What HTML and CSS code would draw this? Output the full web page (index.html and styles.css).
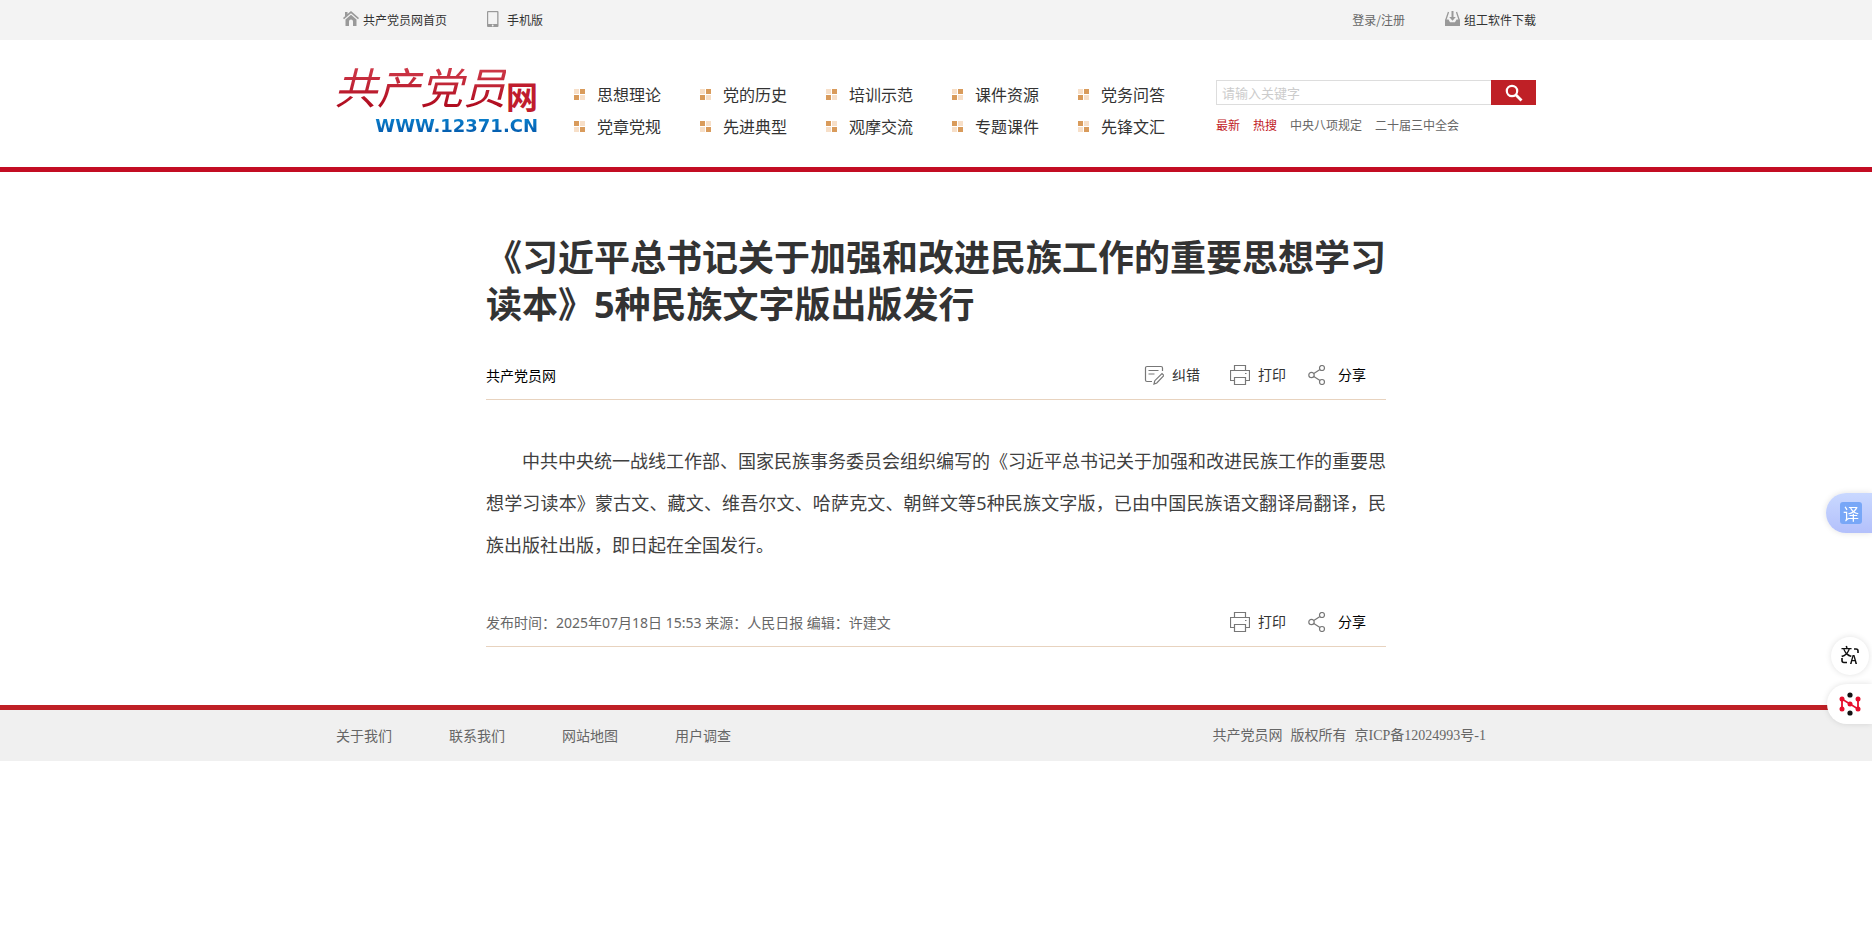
FILE: index.html
```html
<!DOCTYPE html>
<html lang="zh-CN">
  <head>
    <meta charset="UTF-8" />
    <meta name="viewport" content="width=device-width, initial-scale=1.0" />
    <title>《习近平总书记关于加强和改进民族工作的重要思想学习读本》5种民族文字版出版发行</title>
    <link rel="stylesheet" href="styles.css">
  </head>
  <body>
    <!-- shared icons -->
    <svg class="sprite" aria-hidden="true">
      <symbol id="icon-print" viewBox="0 0 20 20">
        <path d="M4.500 5.500V.5h11v5M4.500 15.500h-4v-10h19v10h-4M4.500 12.500h11v7h-11z" />
        <path d="M15 8.500h1.500" />
      </symbol>
      <symbol id="icon-share" viewBox="0 0 18 20">
        <circle cx="3.500" cy="10" r="2.700" />
        <circle cx="14" cy="3" r="2.500" />
        <circle cx="14" cy="17" r="2.500" />
        <path d="M5.800 8.500L12 4.500M5.800 11.500L12 15.500" />
      </symbol>
    </svg>

    <div class="topbar">
      <div class="container topbar-inner">
        <div class="topbar-left">
          <a href="#">
            <svg width="16" height="16" viewBox="0 0 16 16" fill="#999"><path d="M8 0l8 7-1 1.300L8 2.300 1 8.300 0 7l2-1.800V1h2.500v2z" /><path d="M8 3.800l5.500 4.700V15H10v-4.500a2 2 0 0 0-4 0V15H2.500V8.500z" /></svg>
            共产党员网首页
          </a>
          <a href="#">
            <svg width="12" height="16" viewBox="0 0 12 16"><path d="M1 0h9.500a1 1 0 0 1 1 1v14a1 1 0 0 1-1 1H1a1 1 0 0 1-1-1V1a1 1 0 0 1 1-1z" fill="#999" /><path d="M1.200 1.200h9V13H1.200z" fill="#f3f3f3" /><circle cx="5.700" cy="14.500" r=".9" fill="#f3f3f3" /></svg>
            <span class="mobile-text">手机版</span>
          </a>
        </div>
        <div class="topbar-right">
          <a class="login" href="#">登录/注册</a>
          <a href="#">
            <svg width="15" height="16" viewBox="0 0 15 16"><path d="M3.500 1L.8 9M11.500 1l2.700 8" stroke="#999" stroke-width="1.300" fill="none" /><path d="M6.500 0h2v6h2.300L7.500 9.800 4.200 6h2.300z" fill="#999" /><path d="M0 8.500h3.500l1.500 2.700h5l1.500-2.700H15V15H0z" fill="#999" /></svg>
            组工软件下载
          </a>
        </div>
      </div>
    </div>

    <header class="header">
      <div class="container header-inner">
        <a class="logo" href="#">
          <span class="logo-name"><span class="logo-script">共产党员</span><span class="logo-net">网</span></span>
          <span class="logo-url">WWW.12371.CN</span>
        </a>
        <nav class="nav">
          <a href="#">思想理论</a>
          <a href="#">党的历史</a>
          <a href="#">培训示范</a>
          <a href="#">课件资源</a>
          <a href="#">党务问答</a>
          <a class="alt" href="#">党章党规</a>
          <a class="alt" href="#">先进典型</a>
          <a class="alt" href="#">观摩交流</a>
          <a class="alt" href="#">专题课件</a>
          <a class="alt" href="#">先锋文汇</a>
        </nav>
        <div class="search">
          <form class="search-form">
            <input type="text" placeholder="请输入关键字" aria-label="请输入关键字" />
            <button type="submit" aria-label="搜索">
              <svg width="18" height="18" viewBox="0 0 18 18" fill="none" stroke="#fff"><circle cx="7" cy="7" r="5.200" stroke-width="2.200" /><path d="M11 11l5.500 5.500" stroke-width="2.800" /></svg>
            </button>
          </form>
          <div class="hot">
            <a class="red" href="#">最新</a>
            <a class="red" href="#">热搜</a>
            <a href="#">中央八项规定</a>
            <a href="#">二十届三中全会</a>
          </div>
        </div>
      </div>
    </header>

    <main class="article">
      <h1>《习近平总书记关于加强和改进民族工作的重要思想学习读本》5种民族文字版出版发行</h1>
      <div class="meta">
        <span class="site">共产党员网</span>
        <div class="tools">
          <button type="button" class="tool tool-edit">
            <svg width="20" height="20" viewBox="0 0 20 20"><path d="M18.500 6V3A1.500 1.500 0 0 0 17 1.500H3A1.500 1.500 0 0 0 1.500 3v12A1.500 1.500 0 0 0 3 16.500h5M4.500 5.500h10M4.500 9h6" /><path d="M10 19l.8-3.300L18 8.500l2 2-7.200 7.500z" /></svg>
            纠错
          </button>
          <button type="button" class="tool"><svg width="20" height="20"><use href="#icon-print" /></svg>打印</button>
          <button type="button" class="tool tool-share"><svg width="18" height="20"><use href="#icon-share" /></svg>分享</button>
        </div>
      </div>
      <div class="content">
        <p>中共中央统一战线工作部、国家民族事务委员会组织编写的《习近平总书记关于加强和改进民族工作的重要思想学习读本》蒙古文、藏文、维吾尔文、哈萨克文、朝鲜文等5种民族文字版，已由中国民族语文翻译局翻译，民族出版社出版，即日起在全国发行。</p>
      </div>
      <div class="meta">
        <span class="source">发布时间：2025年07月18日 15:53 来源：人民日报 编辑：许建文</span>
        <div class="tools">
          <button type="button" class="tool"><svg width="20" height="20"><use href="#icon-print" /></svg>打印</button>
          <button type="button" class="tool tool-share"><svg width="18" height="20"><use href="#icon-share" /></svg>分享</button>
        </div>
      </div>
    </main>

    <footer class="footer">
      <div class="container footer-inner">
        <div class="footer-links">
          <a href="#">关于我们</a>
          <a href="#">联系我们</a>
          <a href="#">网站地图</a>
          <a href="#">用户调查</a>
        </div>
        <div class="copyright">
          <span>共产党员网</span>
          <span>版权所有</span>
          <a href="#">京ICP备12024993号-1</a>
        </div>
      </div>
    </footer>

    <!-- floating buttons on the right edge -->
    <button type="button" class="float float-translate"><span>译</span></button>
    <button type="button" class="float float-lang" aria-label="切换语言">
      <svg width="26" height="26" viewBox="0 0 26 26">
        <text x="4" y="13" font-size="11">文</text>
        <text x="13" y="21" font-size="11">A</text>
        <path d="M17 6h2a2 2 0 0 1 2 2v2M5 15v2.500a2 2 0 0 0 2 2h3" fill="none" stroke="#111" stroke-width="1.600" />
      </svg>
    </button>
    <button type="button" class="float float-tool" aria-label="工具">
      <svg width="22" height="24" viewBox="0 0 22 24">
        <path d="M3 17V7l16 10V7" fill="none" stroke="#e60f2d" stroke-width="1.800" />
        <g fill="#e60f2d"><circle cx="3" cy="7" r="2.500" /><circle cx="3" cy="17" r="2.500" /><circle cx="11" cy="12" r="2.500" /><circle cx="19" cy="7" r="2.500" /><circle cx="19" cy="17" r="2.500" /></g>
        <circle cx="11" cy="3" r="2.600" fill="#111" />
        <circle cx="11" cy="21" r="2.600" fill="#111" />
      </svg>
    </button>
  </body>
</html>
```
FILE: styles.css
```css
* {
  box-sizing: border-box;
}
body {
  margin: 0;
  font-family: "Noto Sans CJK SC", sans-serif;
  font-size: 14px;
  color: #333;
  background: #fff;
}
a {
  color: inherit;
  text-decoration: none;
}
button {
  border: none;
  padding: 0;
  font-family: inherit;
  cursor: pointer;
}
svg {
  display: block;
  flex: none;
}
.sprite {
  position: absolute;
  width: 0;
  height: 0;
}
.container {
  max-width: 1200px;
  margin: 0 auto;
}

/* top bar */
.topbar {
  background: #f3f3f3;
  font-size: 12px;
  line-height: 40px;
}
.topbar-inner,
.topbar-left,
.topbar-right,
.topbar a {
  display: flex;
  align-items: center;
}
.topbar-inner {
  justify-content: space-between;
  padding-left: 7px;
}
.topbar-left,
.topbar-right {
  gap: 40px;
}
.topbar a {
  gap: 4px;
}
.topbar svg {
  margin-bottom: 2px;
}
.mobile-text {
  padding-left: 4px;
}
.topbar .login {
  color: #666;
}

/* header */
.header {
  border-bottom: 5px solid #c30d23;
}
.header-inner {
  display: flex;
  align-items: flex-start;
  padding: 14px 0 25px;
}
.logo {
  width: 202px;
  display: flex;
  flex-direction: column;
  align-items: flex-end;
  white-space: nowrap;
}
.logo-name {
  display: flex;
  align-items: flex-end;
}
.logo-script {
  font-size: 43px;
  font-style: italic;
  line-height: 62px;
  background: linear-gradient(#d94a58, #a80014);
  background-clip: text;
  color: transparent;
}
.logo-net {
  font-size: 32px;
  font-weight: bold;
  line-height: 42px;
  color: #c01c2e;
}
.logo-url {
  font: bold 18px/20px "DejaVu Sans", sans-serif;
  background: linear-gradient(#0a84d0, #0455a8);
  background-clip: text;
  color: transparent;
}
.nav {
  display: grid;
  grid-template-columns: repeat(5, 126px);
  grid-auto-rows: 32px;
  margin: 24px 0 0 36px;
  font-size: 16px;
}
.nav a {
  display: flex;
  align-items: center;
  gap: 12px;
}
.nav a::before {
  content: "";
  width: 11px;
  height: 11px;
  background:
    linear-gradient(#fff, #fff) center / 1px 100% no-repeat,
    linear-gradient(#fff, #fff) center / 100% 1px no-repeat,
    conic-gradient(#d99b5b 25%, #f7dfc8 0 50%, #d99b5b 0 75%, #f7dfc8 0);
}
.nav a.alt::before {
  background:
    linear-gradient(#fff, #fff) center / 1px 100% no-repeat,
    linear-gradient(#fff, #fff) center / 100% 1px no-repeat,
    conic-gradient(#f7dfc8 25%, #d99b5b 0 50%, #f7dfc8 0 75%, #d99b5b 0);
}
.search {
  width: 320px;
  margin-left: auto;
  padding-top: 26px;
}
.search-form {
  display: flex;
  height: 25px;
}
.search-form input {
  flex: 1;
  min-width: 0;
  border: 1px solid #ddd;
  border-right: none;
  padding: 0 5px;
  font: 13px "Noto Sans CJK SC", sans-serif;
  outline: none;
}
.search-form input::placeholder {
  color: #ccc;
}
.search-form button {
  width: 45px;
  display: flex;
  align-items: center;
  justify-content: center;
  background: #bf2026;
}
.hot {
  display: flex;
  gap: 13px;
  margin-top: 10px;
  font-size: 12px;
  line-height: 20px;
  color: #666;
}
.hot .red {
  color: #bf2026;
}

/* article */
.article {
  max-width: 900px;
  margin: 0 auto;
  padding: 62px 0 58px;
  font-family: "Noto Sans", "Noto Sans CJK SC", sans-serif;
}
.article h1 {
  margin: 0 0 22px;
  font-size: 36px;
  line-height: 47px;
}
.meta {
  display: flex;
  justify-content: space-between;
  align-items: center;
  height: 50px;
  padding-right: 20px;
  border-bottom: 1px solid #e8d3bf;
}
.site {
  color: #000;
}
.source {
  color: #666;
}
.tools {
  display: flex;
  gap: 22px;
}
.tool {
  display: flex;
  align-items: center;
  gap: 8px;
  background: none;
  font-size: 14px;
  line-height: 20px;
  color: #333;
}
.tool svg {
  fill: none;
  stroke: #777;
  stroke-width: 1.2;
}
.tool-edit {
  margin-right: 8px;
}
.tool-share {
  gap: 12px;
  color: #000;
}
.content {
  padding: 40px 0 31px;
  font-size: 18px;
  line-height: 42px;
  color: #404040;
}
.content p {
  margin: 0;
  text-indent: 2em;
  text-align: justify;
}

/* footer */
.footer {
  border-top: 5px solid #bf2026;
  background: #f0f0f0;
  color: #666;
  line-height: 51px;
}
.footer-inner {
  display: flex;
  justify-content: space-between;
  padding-right: 50px;
}
.footer-links {
  display: flex;
  gap: 57px;
}
.copyright {
  display: flex;
  gap: 8px;
  font-family: "Liberation Serif", "Noto Sans CJK SC", serif;
}

/* floating buttons */
.float {
  position: fixed;
  right: 0;
  display: flex;
  align-items: center;
  justify-content: center;
  background: #fff;
  box-shadow: 0 0 6px rgba(0, 0, 0, 0.12);
}
.float-translate {
  top: 493px;
  width: 46px;
  height: 40px;
  padding-left: 4px;
  border-radius: 20px 0 0 20px;
  background: linear-gradient(#c9d8ff, #b3c0fb);
}
.float-translate span {
  width: 22px;
  border-radius: 3px;
  background: #78a7f7;
  color: #fff;
  font-size: 16px;
  line-height: 22px;
}
.float-lang {
  top: 637px;
  right: 3px;
  width: 38px;
  height: 38px;
  border-radius: 50%;
}
.float-lang text {
  font-weight: bold;
  fill: #111;
}
.float-tool {
  top: 684px;
  width: 45px;
  height: 40px;
  border-radius: 20px 0 0 20px;
}
```
